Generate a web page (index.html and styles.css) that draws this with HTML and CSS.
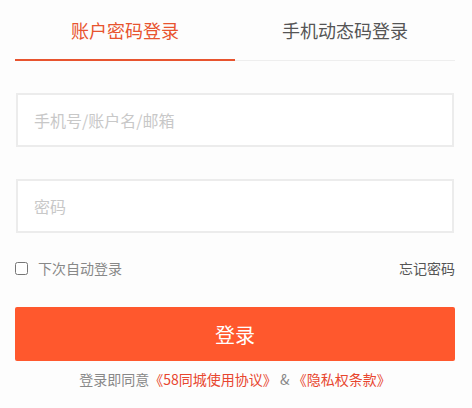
FILE: index.html
```html
<!DOCTYPE html>
<html lang="zh-CN">

<head>
    <meta charset="UTF-8">
    <meta name="viewport" content="width=device-width, initial-scale=1.0">
    <title>登录</title>
    <link rel="stylesheet" href="styles.css">
</head>

<body>
    <main class="login">
        <nav class="tabs">
            <div class="tab active">账户密码登录</div>
            <div class="tab">手机动态码登录</div>
        </nav>

        <form class="login-form">
            <input class="field" type="text" placeholder="手机号/账户名/邮箱">
            <input class="field" type="password" placeholder="密码">

            <div class="options">
                <label class="remember">
                    <input type="checkbox">
                    <span>下次自动登录</span>
                </label>
                <a class="forgot" href="#">忘记密码</a>
            </div>

            <button class="submit" type="button">登录</button>

            <p class="agreement">
                登录即同意<a href="#">《58同城使用协议》</a> &amp; <a href="#">《隐私权条款》</a>
            </p>
        </form>
    </main>
</body>

</html>
```

FILE: styles.css
```css
* {
    margin: 0;
    padding: 0;
    box-sizing: border-box;
}

body {
    font-family: "Noto Sans CJK SC", "Liberation Sans", sans-serif;
    background-color: #fdfdfd;
    color: #555;
}

.login {
    padding: 0 17px 0 15px;
}

.tabs {
    display: flex;
    border-bottom: 1px solid #eeeeee;
}

.tab {
    flex: 1;
    text-align: center;
    font-size: 18px;
    line-height: 22px;
    padding: 19px 0 18px;
    color: #555;
    margin-bottom: -1px;
    border-bottom: 2px solid transparent;
}

.tab.active {
    color: #e8542f;
    border-bottom-color: #e8542f;
}

.login-form {
    display: flex;
    flex-direction: column;
    padding-top: 32px;
}

.field {
    height: 54px;
    margin: 0 1px 32px;
    padding: 0 16px;
    border: 2px solid #ececec;
    background: #fff;
    font-family: inherit;
    font-size: 16px;
    color: #333;
    outline: none;
}

.field::placeholder {
    color: #c8c8c8;
}

.options {
    display: flex;
    justify-content: space-between;
    align-items: center;
    margin-top: -7px;
    font-size: 14px;
    line-height: 20px;
}

.remember {
    display: flex;
    align-items: center;
    gap: 10px;
    color: #888;
}

.remember input {
    width: 13px;
    height: 13px;
    margin: 0;
}

.forgot {
    color: #555;
    text-decoration: none;
}

.submit {
    margin-top: 29px;
    height: 54px;
    border: none;
    border-radius: 2px;
    background-color: #ff582d;
    color: #fff;
    font-family: inherit;
    font-size: 20px;
}

.agreement {
    margin-top: 8px;
    text-align: center;
    font-size: 14px;
    line-height: 20px;
    color: #888;
}

.agreement a {
    color: #e8462f;
    text-decoration: none;
}
```
